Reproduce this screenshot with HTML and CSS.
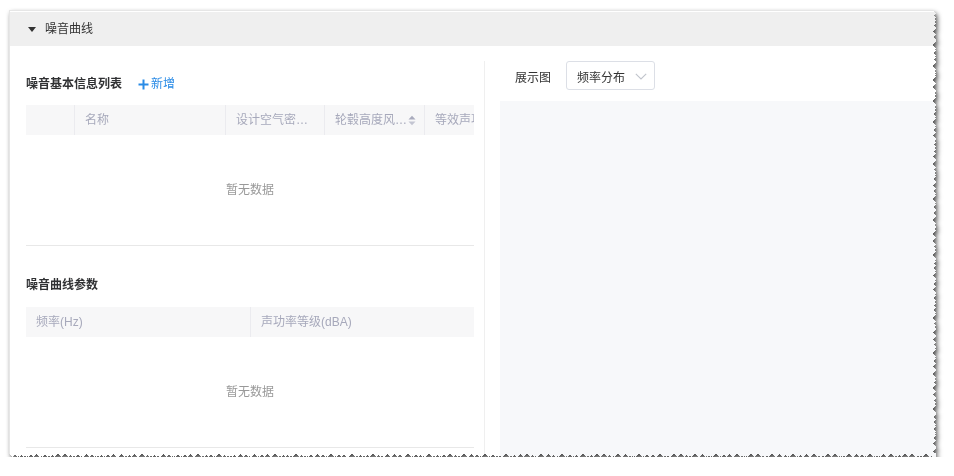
FILE: index.html
```html
<!DOCTYPE html>
<html lang="zh-CN">
<head>
<meta charset="utf-8">
<title>噪音曲线</title>
<link rel="stylesheet" href="styles.css">
</head>
<body>
<div class="frame">
  <div class="sheet">
    <div class="collapse-head">
      <span class="caret"></span>
      <span class="collapse-title">噪音曲线</span>
    </div>
    <div class="collapse-body">
      <div class="left-pane">
        <div class="section-head first">
          <span class="section-title">噪音基本信息列表</span>
          <a class="add-link">
            <svg class="plus" width="11" height="11" viewBox="0 0 11 11"><path d="M5.5 0.5v10M0.5 5.5h10" stroke="#2a8be6" stroke-width="2" fill="none"/></svg>新增
          </a>
        </div>
        <div class="table">
          <div class="thead cols-basic">
            <div class="th"></div>
            <div class="th bordered">名称</div>
            <div class="th bordered">设计空气密度(kg/m³)</div>
            <div class="th bordered sortable">
              <span class="th-text">轮毂高度风速(m/s)</span>
              <svg class="sorter" width="8" height="14" viewBox="0 0 8 14"><polygon points="0.5,6.5 4,2.8 7.5,6.5" fill="#a9abbd"/><polygon points="0.5,8.5 4,12.2 7.5,8.5" fill="#c3c5d2"/></svg>
            </div>
            <div class="th bordered">等效声功率级</div>
          </div>
          <div class="empty">暂无数据</div>
        </div>
        <div class="section-head second">
          <span class="section-title">噪音曲线参数</span>
        </div>
        <div class="table">
          <div class="thead cols-curve">
            <div class="th">频率(Hz)</div>
            <div class="th bordered">声功率等级(dBA)</div>
          </div>
          <div class="empty">暂无数据</div>
        </div>
      </div>
      <div class="right-pane">
        <div class="toolbar">
          <span class="toolbar-label">展示图</span>
          <div class="select">
            <span>频率分布</span>
            <svg width="12" height="7" viewBox="0 0 12 7"><path d="M0.8 0.8l5.2 5.2 5.2-5.2" stroke="#c0c4cc" stroke-width="1.1" fill="none"/></svg>
          </div>
        </div>
        <div class="chart"></div>
      </div>
    </div>
  </div>
</div>
</body>
</html>
```

FILE: styles.css
```css
* {
  box-sizing: border-box;
}

body {
  margin: 0;
  background: #ffffff;
  font-family: "Liberation Sans", "Noto Sans CJK SC", sans-serif;
  font-size: 12px;
  color: #333333;
}

.frame {
  width: 944px;
  padding: 10px 0 0 9px;
  filter: drop-shadow(2px 3px 2.5px rgba(0, 0, 0, 0.7));
}

.sheet {
  width: 927px;
  height: 447px;
  overflow: hidden;
  background: #ffffff;
  border-top: 1px solid #e6e6e6;
  border-left: 1px solid #e6e6e6;
  padding-top: 1px;
  -webkit-mask:
    linear-gradient(#000 0 0) left top / calc(100% - 4px) calc(100% - 4px) no-repeat,
    conic-gradient(from -135deg at right, #000 90deg, #0000 0) right top / 4px 7px repeat-y,
    conic-gradient(from -135deg at right, #000 90deg, #0000 0) right 0 top 2px / 4px 11px repeat-y,
    conic-gradient(from -135deg at right, #000 90deg, #0000 0) right 0 top 5px / 4px 17px repeat-y,
    conic-gradient(from -45deg at bottom, #000 90deg, #0000 0) left bottom / 7px 4px repeat-x,
    conic-gradient(from -45deg at bottom, #000 90deg, #0000 0) left 3px bottom 0 / 11px 4px repeat-x,
    conic-gradient(from -45deg at bottom, #000 90deg, #0000 0) left 5px bottom 0 / 19px 4px repeat-x;
  mask:
    linear-gradient(#000 0 0) left top / calc(100% - 4px) calc(100% - 4px) no-repeat,
    conic-gradient(from -135deg at right, #000 90deg, #0000 0) right top / 4px 7px repeat-y,
    conic-gradient(from -135deg at right, #000 90deg, #0000 0) right 0 top 2px / 4px 11px repeat-y,
    conic-gradient(from -135deg at right, #000 90deg, #0000 0) right 0 top 5px / 4px 17px repeat-y,
    conic-gradient(from -45deg at bottom, #000 90deg, #0000 0) left bottom / 7px 4px repeat-x,
    conic-gradient(from -45deg at bottom, #000 90deg, #0000 0) left 3px bottom 0 / 11px 4px repeat-x,
    conic-gradient(from -45deg at bottom, #000 90deg, #0000 0) left 5px bottom 0 / 19px 4px repeat-x;
}

/* collapse header */
.collapse-head {
  width: 980px;
  height: 34px;
  background: #efefef;
  display: flex;
  align-items: center;
  padding-left: 18px;
}

.caret {
  width: 0;
  height: 0;
  border-left: 4px solid transparent;
  border-right: 4px solid transparent;
  border-top: 5px solid #333333;
  margin-right: 9px;
}

.collapse-title {
  line-height: 20px;
  color: #333333;
}

/* body */
.collapse-body {
  width: 980px;
  display: flex;
  padding-top: 15px;
}

.left-pane {
  width: 475px;
  flex: none;
  padding: 0 10px 0 16px;
  border-right: 1px solid #efefef;
  height: 420px;
}

.section-head {
  display: flex;
  align-items: center;
  height: 20px;
  line-height: 20px;
}

.section-head.first {
  margin-top: 13px;
}

.section-head.first + .table {
  margin-top: 11px;
}

.section-head.second {
  margin-top: 29px;
}

.section-head.second + .table {
  margin-top: 12px;
}

.section-title {
  font-weight: bold;
  color: #303133;
}

.add-link {
  display: flex;
  align-items: center;
  margin-left: 16px;
  color: #2a8be6;
  cursor: pointer;
}

.plus {
  margin-right: 2px;
}

.table {
  width: 448px;
  overflow: hidden;
}

.thead {
  display: grid;
  height: 30px;
  background: #f7f7f8;
}

.cols-basic {
  grid-template-columns: 48px 151px 99px 100px 120px;
}

.cols-curve {
  grid-template-columns: 224px 224px;
}

.th {
  padding: 0 10px;
  line-height: 30px;
  color: #a7a9bb;
  white-space: nowrap;
  overflow: hidden;
  text-overflow: ellipsis;
}

.th.bordered {
  border-left: 1px solid #ebebef;
}

.th.sortable {
  display: flex;
  align-items: center;
  padding-right: 8px;
}

.th-text {
  flex: 1;
  min-width: 0;
  overflow: hidden;
  text-overflow: ellipsis;
}

.sorter {
  flex: none;
}

.empty {
  height: 111px;
  display: flex;
  align-items: center;
  justify-content: center;
  padding-bottom: 3px;
  color: #999999;
  border-bottom: 1px solid #e8e8e8;
}

/* right pane */
.right-pane {
  flex: 1;
  padding-left: 15px;
}

.toolbar {
  display: flex;
  align-items: center;
  height: 29px;
}

.toolbar-label {
  margin-left: 15px;
  margin-right: 15px;
  padding-top: 1px;
  color: #333333;
}

.select {
  width: 89px;
  height: 29px;
  border: 1px solid #dcdfe6;
  border-radius: 3px;
  display: flex;
  align-items: center;
  justify-content: space-between;
  padding: 1px 7px 0 10px;
  color: #333333;
}

.chart {
  margin-top: 11px;
  height: 400px;
  background: #f7f8fa;
}
```
